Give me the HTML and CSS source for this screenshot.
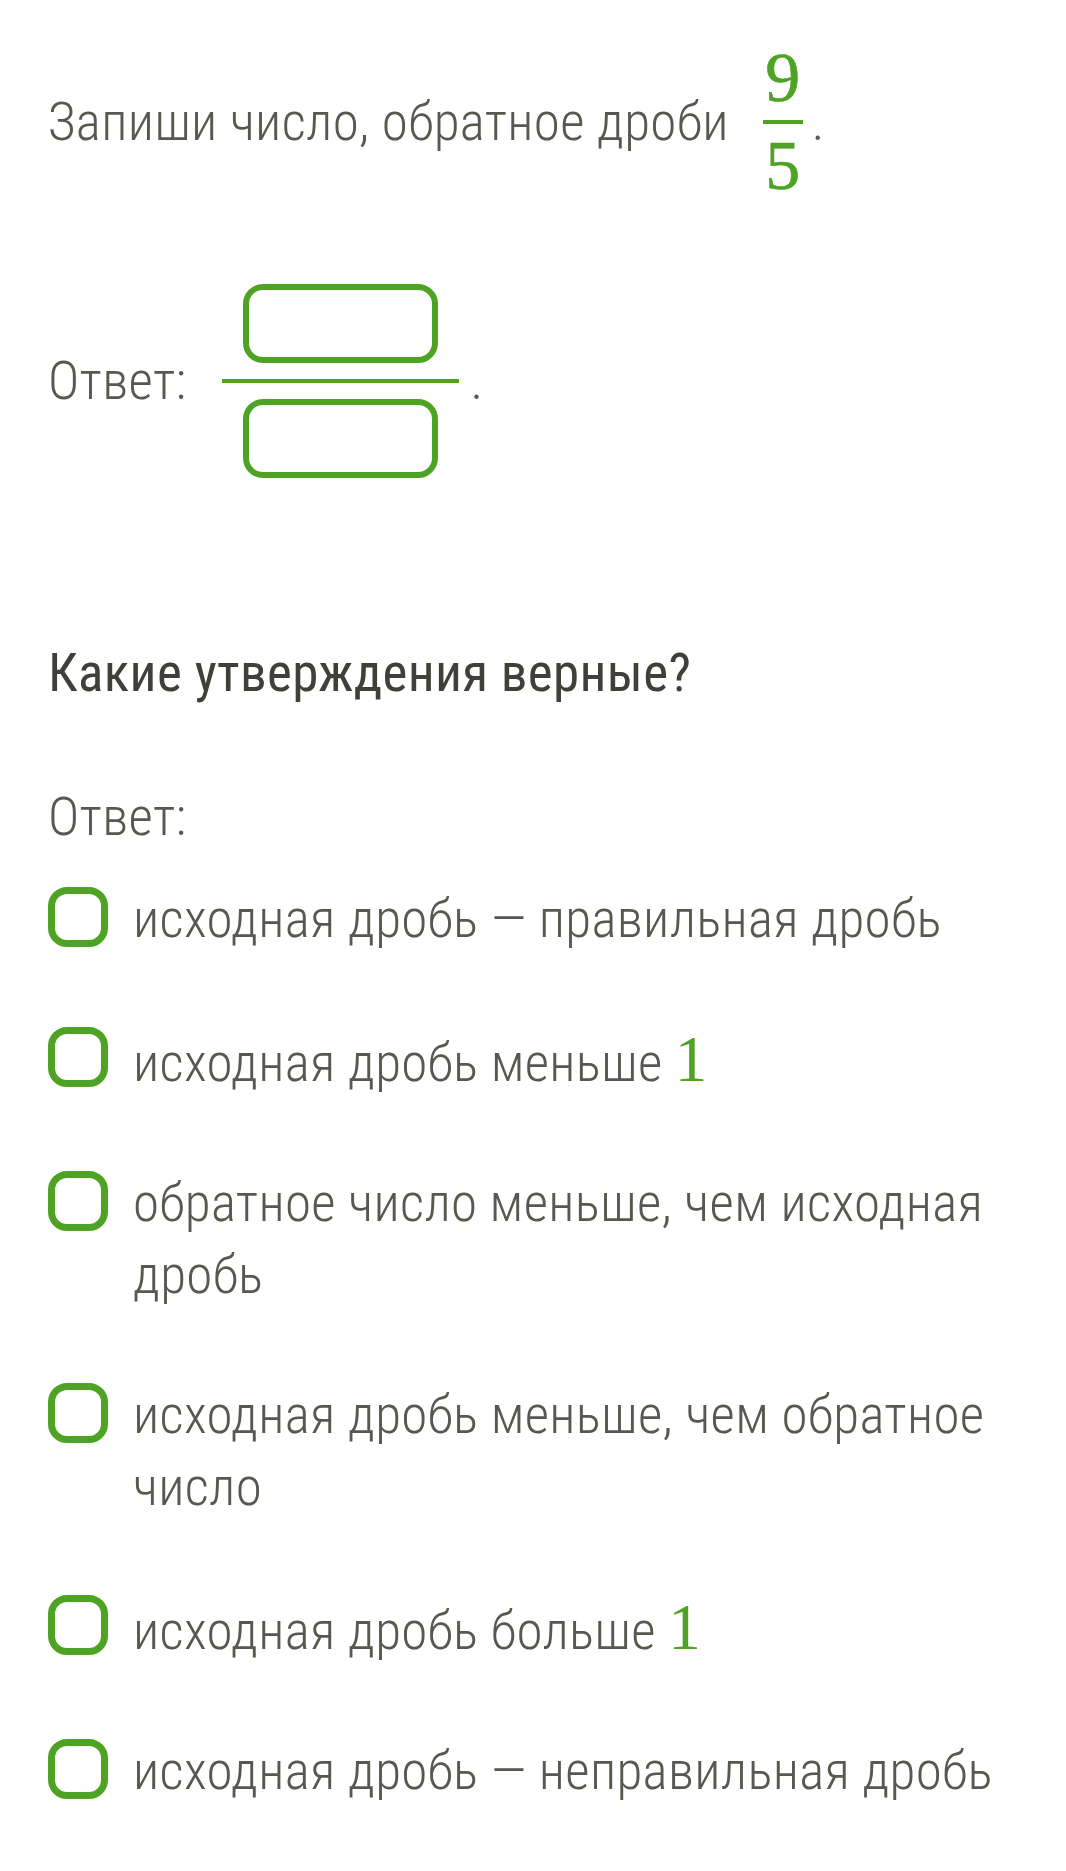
FILE: index.html
```html
<!DOCTYPE html>
<html lang="ru">
<head>
<meta charset="utf-8">
<title>Обратное число</title>
<link rel="stylesheet" href="styles.css">
</head>
<body>
<main class="page">
  <section class="task">
    <div class="row title-row">
      <span class="txt">Запиши число, обратное дроби</span>
      <span class="frac frac-given">
        <span class="num">9</span>
        <span class="bar"></span>
        <span class="den">5</span>
      </span>
      <span class="dot">.</span>
    </div>
    <div class="row answer-row">
      <span class="txt">Ответ:</span>
      <span class="frac frac-input">
        <span class="box"></span>
        <span class="bar"></span>
        <span class="box"></span>
      </span>
      <span class="dot">.</span>
    </div>
  </section>

  <section class="task2">
    <h2 class="question">Какие утверждения верные?</h2>
    <p class="answer-label">Ответ:</p>
    <ul class="options">
      <li class="option"><span class="check"></span><span class="opt-text">исходная дробь — правильная дробь</span></li>
      <li class="option"><span class="check"></span><span class="opt-text">исходная дробь меньше <span class="math">1</span></span></li>
      <li class="option"><span class="check"></span><span class="opt-text">обратное число меньше, чем исходная дробь</span></li>
      <li class="option"><span class="check"></span><span class="opt-text">исходная дробь меньше, чем обратное число</span></li>
      <li class="option"><span class="check"></span><span class="opt-text">исходная дробь больше <span class="math">1</span></span></li>
      <li class="option"><span class="check"></span><span class="opt-text">исходная дробь — неправильная дробь</span></li>
    </ul>
  </section>
</main>
</body>
</html>
```

FILE: styles.css
```css
html, body {
  margin: 0;
  padding: 0;
  background: #ffffff;
}

body {
  font-family: "Roboto", "Noto Sans", sans-serif;
  font-weight: 300;
  font-stretch: 75%;
  font-size: 53px;
  line-height: 71px;
  letter-spacing: 0.35px;
  color: #58584f;
}

.page {
  padding: 46px 48px 40px 48px;
}

.row {
  display: flex;
  align-items: center;
}

.txt {
  white-space: nowrap;
}

.frac {
  display: flex;
  flex-direction: column;
  align-items: stretch;
}

.bar {
  display: block;
  height: 4px;
  background: #4fa324;
}

.frac-given {
  margin-left: 34px;
  width: 40px;
}

.frac-given .num,
.frac-given .den {
  display: block;
  font-family: "Liberation Serif", "DejaVu Serif", serif;
  font-weight: 400;
  font-stretch: normal;
  font-size: 70px;
  line-height: 64px;
  height: 64px;
  letter-spacing: 0;
  text-align: center;
  color: #4fa324;
  -webkit-text-stroke: 0.6px #4fa324;
}

.frac-given .bar {
  margin: 10px 0;
}

.dot {
  margin-left: 9px;
}

.answer-row {
  margin-top: 86px;
}

.frac-input {
  margin-left: 35px;
  width: 237px;
}

.frac-input .box {
  display: block;
  height: 79px;
  margin: 0 21px;
  box-sizing: border-box;
  border: 6px solid #4fa324;
  border-radius: 20px;
}

.frac-input .bar {
  margin: 16px 0;
}

.answer-row .dot {
  margin-left: 12px;
}

.task2 {
  margin-top: 160px;
}

.question {
  margin: 0;
  font-size: 53px;
  font-weight: 400;
  line-height: 71px;
  color: #3f4038;
}

.answer-label {
  margin: 73px 0 0 0;
}

.options {
  list-style: none;
  margin: 30px 0 0 0;
  padding: 0;
  display: flex;
  flex-direction: column;
  gap: 68px;
}

.option {
  display: flex;
  align-items: flex-start;
}

.check {
  flex: none;
  width: 60px;
  height: 60px;
  margin-top: 4px;
  box-sizing: border-box;
  border: 7px solid #4fa324;
  border-radius: 19px;
}

.opt-text {
  margin-left: 25px;
  flex: 1;
  line-height: 72px;
}

.math {
  font-family: "Liberation Serif", "DejaVu Serif", serif;
  font-weight: 400;
  font-stretch: normal;
  font-size: 65px;
  letter-spacing: 0;
  color: #4fa324;
}
```
